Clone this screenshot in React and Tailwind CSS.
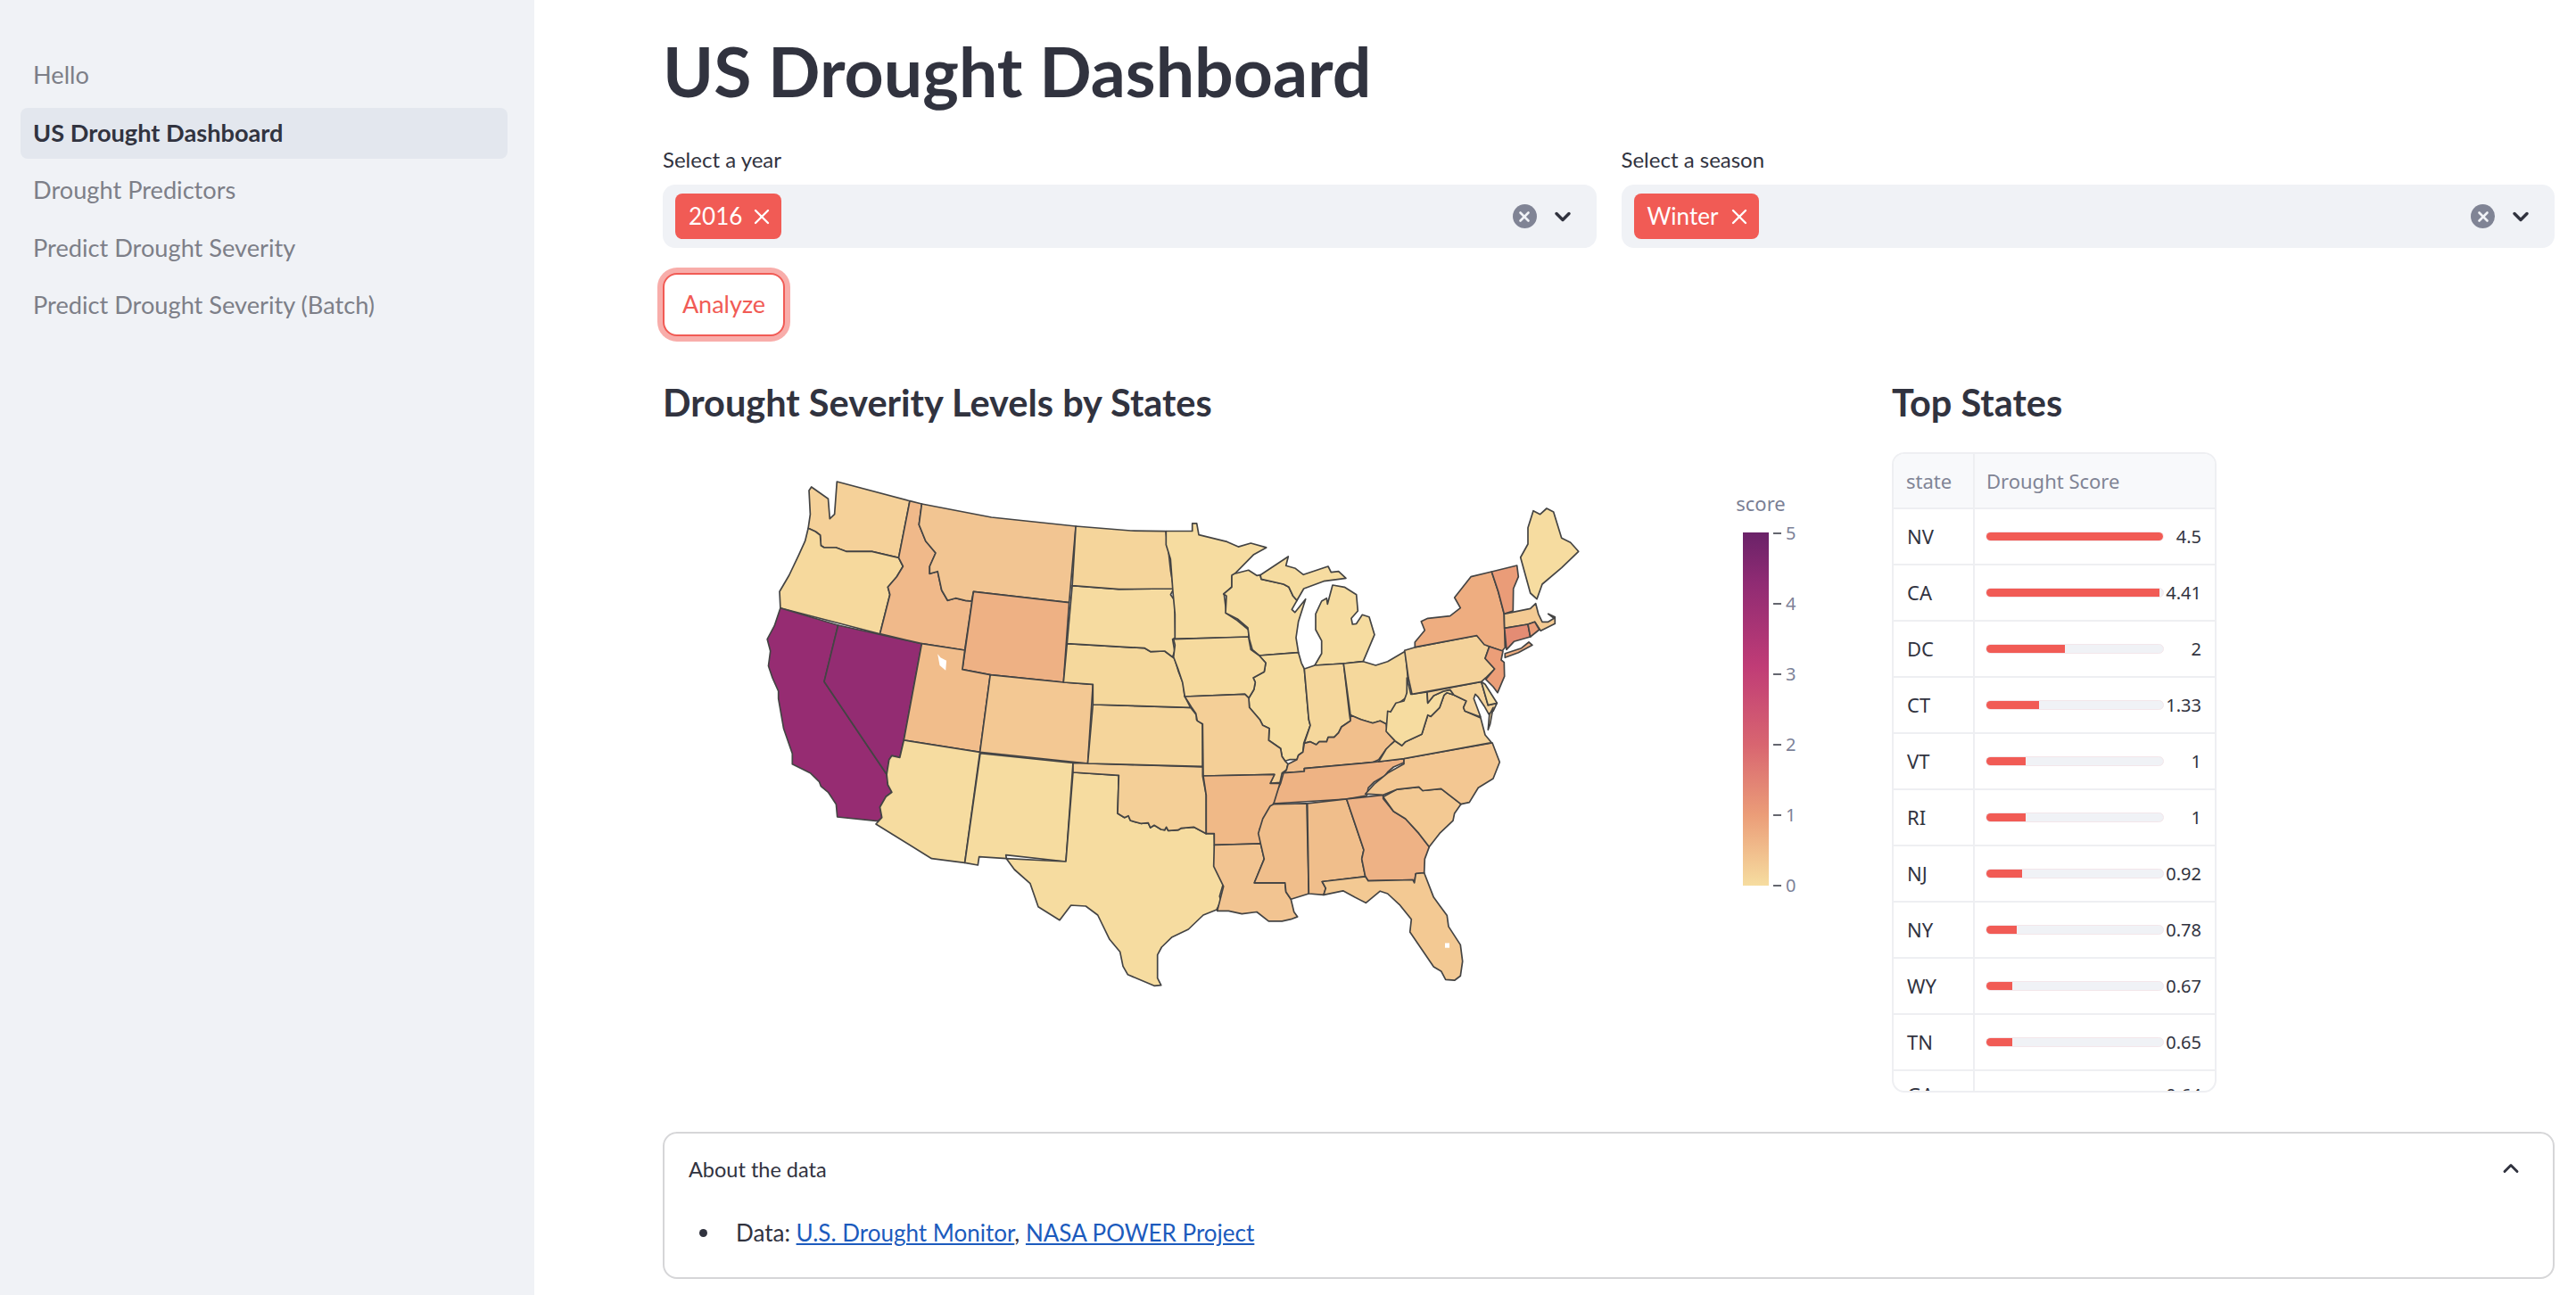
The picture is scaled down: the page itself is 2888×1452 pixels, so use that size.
import React from 'react';
import { ChevronDown, ChevronUp, X } from 'lucide-react';

// map traces were read off crops at different scales, so each one has its own mapper
const mappers = {
  a: (x, y) => [800 + x / 2.24, 500 + y / 3],
  b: (x, y) => [1300 + x / 3, 500 + y / 2.44],
  g: (x, y) => [1080 + x / 3, 840 + y / 3],
  h: (x, y) => [1560 + x / 3, 560 + y / 3],
  i: (x, y) => [1560 + x / 3, 680 + y / 3],
  j: (x, y) => [1300 + x / 3, 600 + y / 3],
};

const toPath = (m, pts) => {
  const out = [];
  for (let n = 0; n < pts.length; n += 2) {
    const [x, y] = mappers[m](pts[n], pts[n + 1]);
    out.push(`${n === 0 ? 'M' : 'L'}${x.toFixed(1)} ${y.toFixed(1)}`);
  }
  return out.join(' ') + ' Z';
};

const states = [
  ['a', '#F5D199', [248,138,290,178,294,245,306,230,312,120,495,185,467,376,400,355,380,355,355,355,335,355,310,342,280,342,272,335,270,300,258,288,240,277,245,230,242,150]],
  ['a', '#F6D99D', [240,277,258,288,270,300,272,335,280,342,310,342,335,355,380,355,400,355,467,376,478,405,462,440,440,475,445,500,420,632,170,545,168,490,192,435,215,370,232,320]],
  ['a', '#962C72', [170,545,315,603,280,793,437,1105,440,1140,450,1165,435,1180,420,1215,425,1250,415,1262,313,1248,310,1205,290,1165,272,1145,268,1130,245,1100,200,1070,200,1035,178,950,165,850,165,825,150,780,140,740,145,690,137,650,155,605]],
  ['a', '#932C72', [315,603,525,665,480,990,470,1048,450,1042,443,1055,437,1105,280,793]],
  ['a', '#F0B98A', [495,185,525,195,518,265,535,320,560,360,545,405,545,430,565,422,575,485,590,520,610,512,635,520,650,522,655,490,633,687,525,665,420,632,445,500,440,475,462,440,478,405,467,376]],
  ['a', '#F2C592', [525,195,700,240,912,270,895,527,655,490,650,522,635,520,610,512,590,520,575,485,565,422,545,430,545,405,560,360,535,320,518,265]],
  ['a', '#EEB184', [655,490,895,527,881,795,697,770,627,752]],
  ['a', '#F1BD8B', [525,665,633,687,627,752,697,770,671,1030,480,990]],
  ['a', '#F3C893', [697,770,881,795,955,802,942,1068,671,1030]],
  ['a', '#F6DCA0', [480,990,671,1030,633,1402,550,1388,410,1272,425,1250,420,1215,435,1180,450,1165,440,1140,437,1105,443,1055,450,1042,470,1048]],
  ['g', '#F6DCA0', [60,14,372,46,348,378,146,356,148,368,56,362,52,390,8,382]],
  ['g', '#F6DCA0', [372,78,526,88,522,216,545,230,558,224,565,240,600,250,625,248,632,264,645,256,668,270,680,272,686,262,692,274,725,272,735,266,778,262,820,284,847,284,850,395,878,450,865,495,870,510,855,540,810,558,760,606,705,632,670,666,656,692,656,770,668,794,645,796,556,758,540,730,530,682,495,640,455,558,415,528,365,525,327,575,255,530,228,452,175,405,148,368,348,378]],
  ['g', '#F4CF97', [372,46,808,60,808,90,820,155,820,284,778,262,735,266,725,272,692,274,686,262,680,272,668,270,645,256,632,264,625,248,600,250,565,240,558,224,545,230,522,216,526,88,372,78]],
  ['a', '#F5D59B', [955,870,1200,880,1215,905,1215,920,1230,935,1230,1078,942,1068]],
  ['a', '#F5D89C', [890,665,1085,680,1100,692,1135,690,1160,715,1170,760,1182,800,1185,840,1200,880,955,870,955,802,881,795]],
  ['a', '#F6DBA0', [903,470,1020,482,1158,480,1150,500,1160,520,1162,645,1155,650,1160,690,1155,710,1135,690,1100,692,1085,680,890,665]],
  ['a', '#F5D59B', [912,270,1050,285,1138,287,1145,360,1150,420,1158,480,1020,482,903,470]],
  ['b', '#F6DCA0', [25,233,113,233,113,212,128,212,135,243,230,262,268,276,310,266,362,278,320,297,256,350,246,358,246,385,220,405,228,458,260,475,302,503,303,523,55,528,55,460,48,400,40,310,25,270]],
  ['j', '#F6DCA0', [255,130,302,118,330,136,342,134,345,148,420,165,438,175,452,205,465,220,448,250,458,260,494,215,470,290,462,345,470,395,338,405,315,385,305,350,300,312,265,282,225,262,228,205,218,198,246,175,246,135]],
  ['j', '#F6DCA0', [342,134,436,72,428,103,460,112,487,133,570,105,580,125,605,122,630,145,555,155,488,180,465,220,452,205,438,175,420,165,345,148]],
  ['j', '#F6DCA0', [585,168,625,175,665,200,670,255,648,280,652,300,665,298,685,268,708,275,726,335,688,425,622,432,525,438,548,398,548,355,528,318,528,265,548,222,565,212,568,232]],
  ['j', '#F6DC9F', [338,405,470,395,480,430,490,450,505,620,510,640,488,700,485,730,470,740,465,755,440,755,425,760,415,745,410,718,370,690,372,650,350,640,340,620,305,580,303,548,320,520,325,495,318,480,355,460,360,430]],
  ['j', '#F5D79C', [490,450,525,438,622,432,642,605,645,625,615,645,605,665,590,680,570,680,565,695,540,695,530,705,510,695,490,700,510,640,505,620]],
  ['j', '#F5D89C', [622,432,688,425,730,438,770,425,830,390,838,480,835,545,800,570,790,600,780,600,775,625,765,635,745,625,720,632,680,620,645,605]],
  ['j', '#F6DA9E', [50,350,302,342,310,385,338,405,360,430,355,460,318,480,325,495,320,520,303,548,290,535,88,543,80,495,65,450,50,410,55,370]],
  ['j', '#F4CF97', [88,543,290,535,303,548,305,580,340,620,350,640,372,650,370,690,410,718,415,745,425,760,435,770,430,790,415,800,408,832,375,835,388,805,150,810,148,635,130,625,125,600,110,578]],
  ['j', '#F1BF8C', [435,770,465,755,470,740,485,730,490,700,510,695,530,705,540,695,565,695,570,680,590,680,605,665,615,645,645,625,645,605,680,620,720,632,745,625,765,635,770,665,795,692,765,720,740,755,720,764,490,785,490,795,420,800,430,790]],
  ['j', '#EEB384', [420,800,490,795,490,785,720,764,825,752,825,765,790,780,770,797,760,810,725,830,705,850,700,876,630,888,385,903,395,865,410,835]],
  ['g', '#F0B987', [810,90,1050,85,1035,115,1068,115,1048,180,1030,215,1000,268,1003,318,847,322,847,284,820,284,820,155]],
  ['b', '#F2C491', [187,1092,343,1088,355,1130,322,1195,425,1195,428,1220,445,1240,455,1275,467,1288,445,1295,415,1300,370,1300,330,1275,280,1280,235,1272,197,1272,218,1205,185,1150]],
  ['b', '#F0BE8B', [388,980,498,978,505,1225,445,1240,428,1220,425,1195,322,1195,355,1130,343,1088,335,1060,350,1020,375,985]],
  ['b', '#F0BE8B', [500,978,632,966,690,1105,683,1130,695,1178,550,1192,562,1210,555,1228,505,1225]],
  ['b', '#EEB285', [632,966,755,955,755,965,790,1000,830,1020,875,1060,910,1097,895,1130,893,1168,865,1170,860,1195,855,1187,705,1190,695,1178,683,1130,690,1105]],
  ['b', '#F3C993', [550,1192,695,1178,705,1190,855,1187,860,1195,865,1170,893,1168,925,1235,970,1285,975,1315,1015,1365,1022,1410,1015,1450,995,1462,965,1460,950,1437,925,1425,845,1330,850,1295,810,1255,770,1225,745,1218,697,1250,660,1235,620,1217,555,1228,562,1210]],
  ['b', '#F3C993', [755,960,800,940,875,933,888,943,950,938,1017,980,995,1005,990,1025,945,1060,910,1097,875,1060,830,1020,790,1000]],
  ['b', '#F3C792', [695,952,725,925,770,895,825,870,825,855,1122,812,1147,865,1125,910,1075,935,1045,975,1017,980,950,938,888,943,875,933,800,940,755,955]],
  ['i', '#F4D29A', [-40,522,45,512,340,458,318,432,303,375,250,352,245,340,255,318,213,298,190,290,180,298,165,340,135,370,125,365,105,430,50,455,38,468,15,452,0,465,-15,480]],
  ['i', '#F6DCA0', [55,240,68,295,123,288,125,325,145,300,178,285,200,280,213,298,190,290,180,298,165,340,135,370,125,365,105,430,50,455,38,468,15,452,-15,420,-10,352,0,355,18,325,45,318,55,290]],
  ['i', '#F4D29A', [123,288,305,253,328,332,358,325,345,352,330,362,315,335,295,305,285,295,280,310,303,372,250,352,245,340,255,318,213,298,200,280,178,285,145,300,125,325]],
  ['i', '#F6DCA0', [305,253,318,262,358,325,328,332]],
  ['i', '#F4D29A', [345,340,335,395,328,415,332,365]],
  ['i', '#F4D29A', [47,148,80,138,290,97,315,125,332,135,318,175,350,210,320,240,305,253,72,295,60,240]],
  ['h', '#EEAD80', [82,497,290,458,315,488,375,510,385,498,383,430,382,385,362,310,340,243,270,260,215,330,235,365,200,392,125,400,103,410,115,440,82,480]],
  ['h', '#EEAD80', [385,518,440,500,465,480,477,490,430,515,385,532]],
  ['h', '#EA9C78', [340,243,425,222,430,260,413,300,412,375,382,385,362,310]],
  ['h', '#F3CA93', [382,385,470,367,488,350,497,385,510,412,530,412,550,400,530,385,553,395,553,418,505,442,485,412,462,420,383,433]],
  ['h', '#E48C74', [383,433,462,420,470,462,415,478,390,505]],
  ['h', '#EC9F7A', [462,420,485,412,500,438,470,462]],
  ['h', '#F6DCA0', [480,38,503,50,525,30,548,42,575,130,605,145,632,175,575,230,510,285,492,335,470,315,437,195,462,150,462,95]],
  ['i', '#EB9E78', [332,135,378,150,372,180,382,188,383,235,360,290,345,270,320,245,350,210,318,175]],
];

const holes = [
  ['a', [565,700,572,712,587,722,585,755,570,738]],
  ['b', [963,1360,978,1360,978,1373,963,1373]],
];

const ticks = [
  ['5', 598],
  ['4', 677],
  ['3', 756],
  ['2', 835],
  ['1', 914],
  ['0', 993],
];

const rows = [
  ['NV', 4.5, '4.5'],
  ['CA', 4.41, '4.41'],
  ['DC', 2, '2'],
  ['CT', 1.33, '1.33'],
  ['VT', 1, '1'],
  ['RI', 1, '1'],
  ['NJ', 0.92, '0.92'],
  ['NY', 0.78, '0.78'],
  ['WY', 0.67, '0.67'],
  ['TN', 0.65, '0.65'],
  ['GA', 0.64, '0.64'],
];

const pages = ['Hello', 'US Drought Dashboard', 'Drought Predictors', 'Predict Drought Severity', 'Predict Drought Severity (Batch)'];

const UsMap = () => (
  <svg viewBox="744 500 1330 730" width="1330" height="730" className="block">
    <defs>
      <linearGradient id="scale" x1="0" y1="0" x2="0" y2="1">
        <stop offset="0" stopColor="#6A2268" />
        <stop offset="0.14" stopColor="#8F2B73" />
        <stop offset="0.38" stopColor="#C03C76" />
        <stop offset="0.6" stopColor="#D86570" />
        <stop offset="0.8" stopColor="#EB9D78" />
        <stop offset="1" stopColor="#F6DDA0" />
      </linearGradient>
    </defs>
    <g stroke="#444444" strokeWidth="1.7" strokeLinejoin="round">
      {states.map(([m, fill, pts], i) => (
        <path key={i} d={toPath(m, pts)} fill={fill} />
      ))}
    </g>
    {holes.map(([m, pts], i) => (
      <path key={i} d={toPath(m, pts)} fill="#ffffff" />
    ))}
    <text x="1975" y="573" textAnchor="middle" fontSize="22" fill="#7A7F95" fontFamily="'Noto Sans', sans-serif">score</text>
    <rect x="1955" y="597" width="29" height="396" fill="url(#scale)" />
    {ticks.map(([label, y]) => (
      <g key={label}>
        <line x1="1989" x2="1998" y1={y} y2={y} stroke="#31333F" strokeWidth="1.5" />
        <text x="2003" y={y + 7} fontSize="20" fill="#7D8298" fontFamily="'Noto Sans', sans-serif">{label}</text>
      </g>
    ))}
  </svg>
);

const TopStates = () => (
  <div className="h-[718px] w-[364px] overflow-hidden rounded-[14px] border-2 border-[#EEEFF2] font-['Noto_Sans',sans-serif] text-[22px] text-[#31333F]">
    <div className="flex h-[62px] items-center border-b-2 border-[#EEEFF2] bg-[#F8F9FB] text-[22px] text-[#808495]">
      <div className="flex h-full w-[91px] items-center border-r-2 border-[#EEEFF2] pl-[14px]">state</div>
      <div className="pl-[13px]">Drought Score</div>
    </div>
    {rows.map(([state, score, label], index) => (
      <div key={state} className={index === 10 ? 'flex h-[63px] items-center border-b-2 border-[#EEEFF2] pb-[8px]' : 'flex h-[63px] items-center border-b-2 border-[#EEEFF2]'}>
        <div className="flex h-full w-[91px] items-center border-r-2 border-[#EEEFF2] pl-[15px]">{state}</div>
        <div className="relative flex flex-1 items-center pl-[12px] pr-[15px]">
          {index < 10 && (
            <div className="h-[11px] w-[200px] overflow-hidden rounded-full border border-[#F3E6EA] bg-[#F0F2F6]">
              <div className="h-full bg-[#F15B55]" style={{ width: `${(score / 4.5) * 100}%` }} />
            </div>
          )}
          <span className="ml-auto text-[20px]">{label}</span>
        </div>
      </div>
    ))}
  </div>
);

const MultiSelect = ({ label, value, tagWidth }) => (
  <div>
    <div className="flex h-[36px] items-center text-[24px] text-[#31333F]">{label}</div>
    <div className="mt-[10px] flex h-[71px] items-center rounded-[14px] bg-[#F0F2F6] pl-[14px] pr-[24px]">
      <div className={`flex h-[51px] ${tagWidth} items-center rounded-[8px] bg-[#F15B55] pl-[15px] text-[26px] text-white`}>
        <span>{value}</span>
        <X size={28} strokeWidth={2} className="ml-auto mr-[8px]" />
      </div>
      <div className="ml-auto flex h-[27px] w-[27px] items-center justify-center rounded-full bg-[#808495]">
        <X size={18} strokeWidth={3.5} className="text-[#F0F2F6]" />
      </div>
      <ChevronDown size={28} strokeWidth={3} className="ml-[15px] text-[#31333F]" />
    </div>
  </div>
);

export default function App() {
  return (
    <div className="flex h-[1452px] w-[2888px] overflow-hidden bg-white font-['Lato',sans-serif] text-[#31333F]">
      {/* Sidebar */}
      <aside className="w-[599px] flex-shrink-0 bg-[#F0F2F6] px-[23px] pt-[56px]">
        <nav className="flex w-[546px] flex-col gap-[7.6px]">
          {pages.map((page) => (
            <div
              key={page}
              className={
                page === 'US Drought Dashboard'
                  ? 'flex h-[57px] items-center rounded-[8px] bg-[#E3E7EE] pl-[14px] text-[27.2px] font-bold text-[#31333F]'
                  : 'flex h-[57px] items-center rounded-[8px] pl-[14px] text-[27.2px] text-[#7D7F88]'
              }
            >
              {page}
            </div>
          ))}
        </nav>
      </aside>

      {/* Main */}
      <main className="flex-1 pl-[144px] pr-[24px]">
        <h1 className="mt-[36px] h-[88px] text-[77px] leading-[86px] font-bold">US Drought Dashboard</h1>

        <div className="mt-[37px] grid grid-cols-2 gap-[28px]">
          <MultiSelect label="Select a year" value="2016" tagWidth="w-[119px]" />
          <MultiSelect label="Select a season" value="Winter" tagWidth="w-[140px]" />
        </div>

        <button className="mt-[28px] block h-[71px] w-[137px] rounded-[16px] border-2 border-[#F15B55] bg-white text-[27px] text-[#F15B55] shadow-[0_0_0_6px_rgba(241,91,85,0.5)]">
          Analyze
        </button>

        <div className="mt-[54px] flex">
          <section className="w-[1378px]">
            <h2 className="h-[40px] text-[41.5px] leading-[40px] font-bold">Drought Severity Levels by States</h2>
            <div className="mt-[29px]">
              <UsMap />
            </div>
          </section>
          <section className="w-[364px]">
            <h2 className="h-[40px] text-[41.5px] leading-[40px] font-bold">Top States</h2>
            <div className="mt-[36px]">
              <TopStates />
            </div>
          </section>
        </div>

        {/* Expander */}
        <div className="mt-[39px] h-[165px] rounded-[16px] border-2 border-[#D6D6D8] pl-[27px] pr-[33px]">
          <div className="flex h-[81px] items-center justify-between text-[23.5px]">
            <span>About the data</span>
            <ChevronUp size={28} strokeWidth={2.5} className="-mt-[4px]" />
          </div>
          <div className="mt-[11px] flex items-center pl-[12px] text-[26px]">
            <span className="h-[9px] w-[9px] rounded-full bg-[#31333F]" />
            <p className="ml-[32px]">
              Data:{' '}
              <a href="#about" className="text-[#1C5BBD] underline">U.S. Drought Monitor</a>,{' '}
              <a href="#about" className="text-[#1C5BBD] underline">NASA POWER Project</a>
            </p>
          </div>
        </div>
      </main>
    </div>
  );
}
